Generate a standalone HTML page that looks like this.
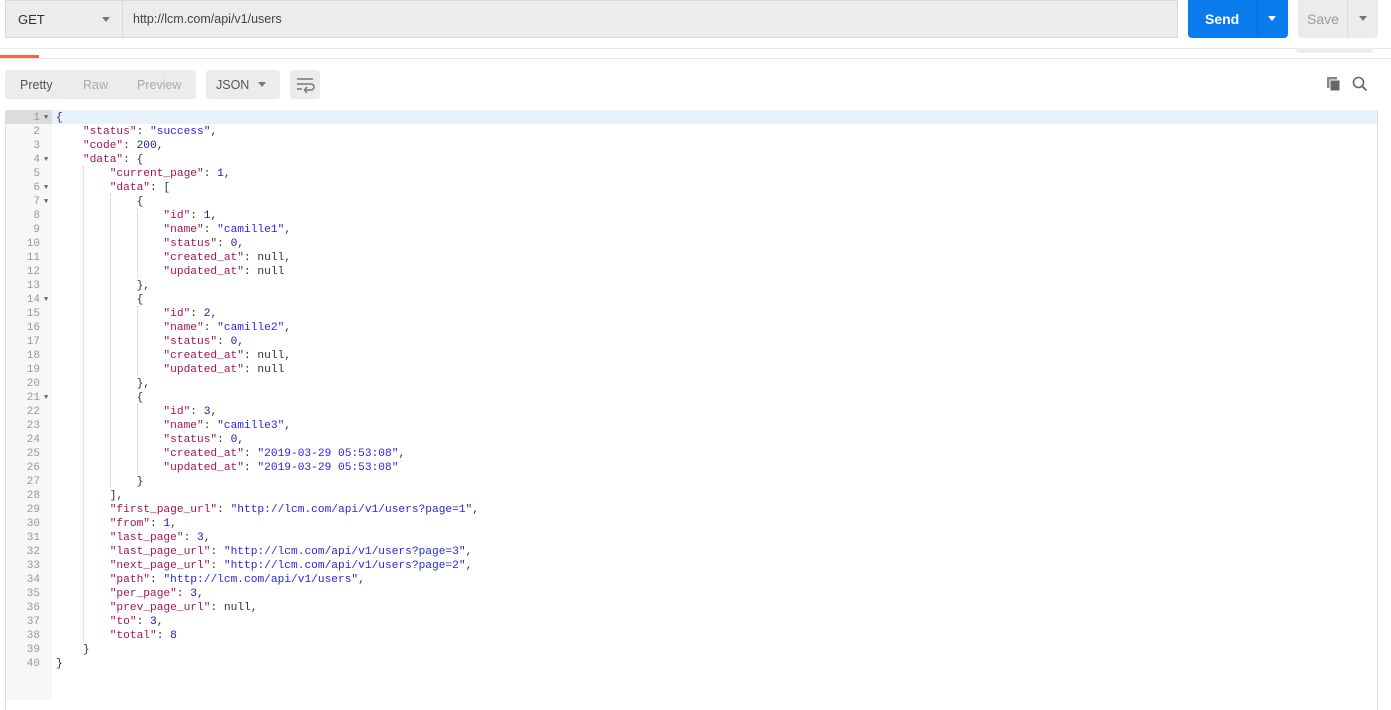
<!DOCTYPE html>
<html><head><meta charset="utf-8"><style>
*{margin:0;padding:0;box-sizing:border-box}
body{width:1391px;height:696px;background:#fff;font-family:"Liberation Sans",sans-serif;position:relative;overflow:hidden}
.abs{position:absolute}
.top{left:0;top:0;width:1391px;height:49px;background:#fff}
.method{left:5px;top:0;width:117px;height:38px;background:#ececec;border:1px solid #d8d8d8;border-right:none;font-size:13px;color:#333;padding:11px 0 0 12px}
.url{left:122px;top:0;width:1056px;height:38px;background:#ececec;border:1px solid #d8d8d8;font-size:12.5px;color:#444;padding:11px 0 0 10px}
.caret{width:0;height:0;border-left:4px solid transparent;border-right:4px solid transparent;border-top:5px solid #777}
.send{left:1188px;top:0;width:100px;height:38px;background:#097bed;border-radius:0 0 4px 4px;color:#fff;font-weight:bold;font-size:14px}
.save{left:1298px;top:0;width:80px;height:38px;background:#ececec;border-radius:0 0 4px 4px;color:#999;font-size:14px}
.tabs{left:5px;top:70px;width:191px;height:29px;background:#ececec;border-radius:3px;font-size:12.5px}
.json{left:206px;top:70px;width:74px;height:29px;background:#ececec;border-radius:3px;font-size:12.5px;color:#555}
.wrap{left:290px;top:70px;width:30px;height:29px;background:#ececec;border-radius:3px}
.ed{left:5px;top:110px;width:1373px;height:600px;border:1px solid #ddd;border-bottom:none}
.gut{left:6px;top:110px;width:46px;height:590px;background:#f7f7f7}
.hl{left:52px;top:110px;width:1325px;height:14px;background:#e8f2fe}
.gh{left:6px;top:110px;width:46px;height:14px;background:#dcdcdc}
pre{font-family:"Liberation Mono",monospace;font-size:11px;line-height:14px;position:absolute;top:111px}
.nums{left:6px;width:34px;text-align:right;color:#999}
.code{left:56px;color:#333;font-size:11.2px}
.k{color:#a31550}.s{color:#2727e0}.n{color:#1a1aa6}
.fold{left:44px;font-family:"Liberation Mono",monospace;font-size:7px;color:#666}
.guide{position:absolute;border-left:1px dotted #ccc}
</style></head><body>
<div class="abs top"></div>
<div class="abs method">GET<div class="abs caret" style="left:96px;top:16px"></div></div>
<div class="abs url">http://lcm.com/api/v1/users</div>
<div class="abs send"><span class="abs" style="left:17px;top:11px">Send</span><div class="abs" style="left:69px;top:0;width:1px;height:38px;background:#0a6ad0"></div><div class="abs caret" style="left:80px;top:16px;border-top-color:#fff"></div></div>
<div class="abs save"><span class="abs" style="left:9px;top:11px">Save</span><div class="abs" style="left:49px;top:0;width:1px;height:38px;background:#ddd"></div><div class="abs caret" style="left:61px;top:16px"></div></div>
<div class="abs" style="left:0;top:48px;width:1391px;height:1px;background:#eaeaea"></div>
<div class="abs" style="left:1296px;top:48px;width:77px;height:5px;background:#ececec;border-radius:0 0 3px 3px"></div>
<div class="abs" style="left:0;top:55px;width:39px;height:3px;background:#f26b3a"></div>
<div class="abs" style="left:0;top:58px;width:1391px;height:1px;background:#e4e4e4"></div>
<div class="abs tabs"><span class="abs" style="left:15px;top:8px;color:#555">Pretty</span><span class="abs" style="left:78px;top:8px;color:#aaa">Raw</span><span class="abs" style="left:132px;top:8px;color:#aaa">Preview</span></div>
<div class="abs json"><span class="abs" style="left:10px;top:8px">JSON</span><div class="abs caret" style="left:52px;top:12px"></div></div>
<div class="abs wrap"><svg width="30" height="29"><path d="M7 9h16M7 14h14a3 3 0 0 1 0 6h-5M7 19h5" stroke="#777" stroke-width="1.5" fill="none"/><path d="M17 17l-2.5 3 2.5 3" stroke="#777" stroke-width="1.5" fill="none"/></svg></div>
<svg class="abs" style="left:1326px;top:76px" width="16" height="16"><rect x="1" y="1" width="10" height="11" fill="#888"/><rect x="4" y="4" width="10" height="11" fill="#666" stroke="#fff" stroke-width="1"/></svg>
<svg class="abs" style="left:1352px;top:76px" width="16" height="16"><circle cx="6.5" cy="6.5" r="5" stroke="#666" stroke-width="1.6" fill="none"/><path d="M10 10l4.5 4.5" stroke="#666" stroke-width="1.8"/></svg>
<div class="abs ed"></div>
<div class="abs gut"></div>
<div class="abs hl"></div>
<div class="abs gh"></div>
<div class="guide" style="left:83px;top:166px;height:476px"></div>
<div class="guide" style="left:110px;top:194px;height:294px"></div>
<div class="guide" style="left:137px;top:208px;height:70px"></div>
<div class="guide" style="left:137px;top:306px;height:70px"></div>
<div class="guide" style="left:137px;top:404px;height:70px"></div>
<pre class="nums">1
2
3
4
5
6
7
8
9
10
11
12
13
14
15
16
17
18
19
20
21
22
23
24
25
26
27
28
29
30
31
32
33
34
35
36
37
38
39
40</pre>
<div class="abs fold" style="top:114px">▼</div>
<div class="abs fold" style="top:156px">▼</div>
<div class="abs fold" style="top:184px">▼</div>
<div class="abs fold" style="top:198px">▼</div>
<div class="abs fold" style="top:296px">▼</div>
<div class="abs fold" style="top:394px">▼</div>
<pre class="code">{
    <span class="k">"status"</span>: <span class="s">"success"</span>,
    <span class="k">"code"</span>: <span class="n">200</span>,
    <span class="k">"data"</span>: {
        <span class="k">"current_page"</span>: <span class="n">1</span>,
        <span class="k">"data"</span>: [
            {
                <span class="k">"id"</span>: <span class="n">1</span>,
                <span class="k">"name"</span>: <span class="s">"camille1"</span>,
                <span class="k">"status"</span>: <span class="n">0</span>,
                <span class="k">"created_at"</span>: null,
                <span class="k">"updated_at"</span>: null
            },
            {
                <span class="k">"id"</span>: <span class="n">2</span>,
                <span class="k">"name"</span>: <span class="s">"camille2"</span>,
                <span class="k">"status"</span>: <span class="n">0</span>,
                <span class="k">"created_at"</span>: null,
                <span class="k">"updated_at"</span>: null
            },
            {
                <span class="k">"id"</span>: <span class="n">3</span>,
                <span class="k">"name"</span>: <span class="s">"camille3"</span>,
                <span class="k">"status"</span>: <span class="n">0</span>,
                <span class="k">"created_at"</span>: <span class="s">"2019-03-29 05:53:08"</span>,
                <span class="k">"updated_at"</span>: <span class="s">"2019-03-29 05:53:08"</span>
            }
        ],
        <span class="k">"first_page_url"</span>: <span class="s">"http://lcm.com/api/v1/users?page=1"</span>,
        <span class="k">"from"</span>: <span class="n">1</span>,
        <span class="k">"last_page"</span>: <span class="n">3</span>,
        <span class="k">"last_page_url"</span>: <span class="s">"http://lcm.com/api/v1/users?page=3"</span>,
        <span class="k">"next_page_url"</span>: <span class="s">"http://lcm.com/api/v1/users?page=2"</span>,
        <span class="k">"path"</span>: <span class="s">"http://lcm.com/api/v1/users"</span>,
        <span class="k">"per_page"</span>: <span class="n">3</span>,
        <span class="k">"prev_page_url"</span>: null,
        <span class="k">"to"</span>: <span class="n">3</span>,
        <span class="k">"total"</span>: <span class="n">8</span>
    }
}</pre>
</body></html>
